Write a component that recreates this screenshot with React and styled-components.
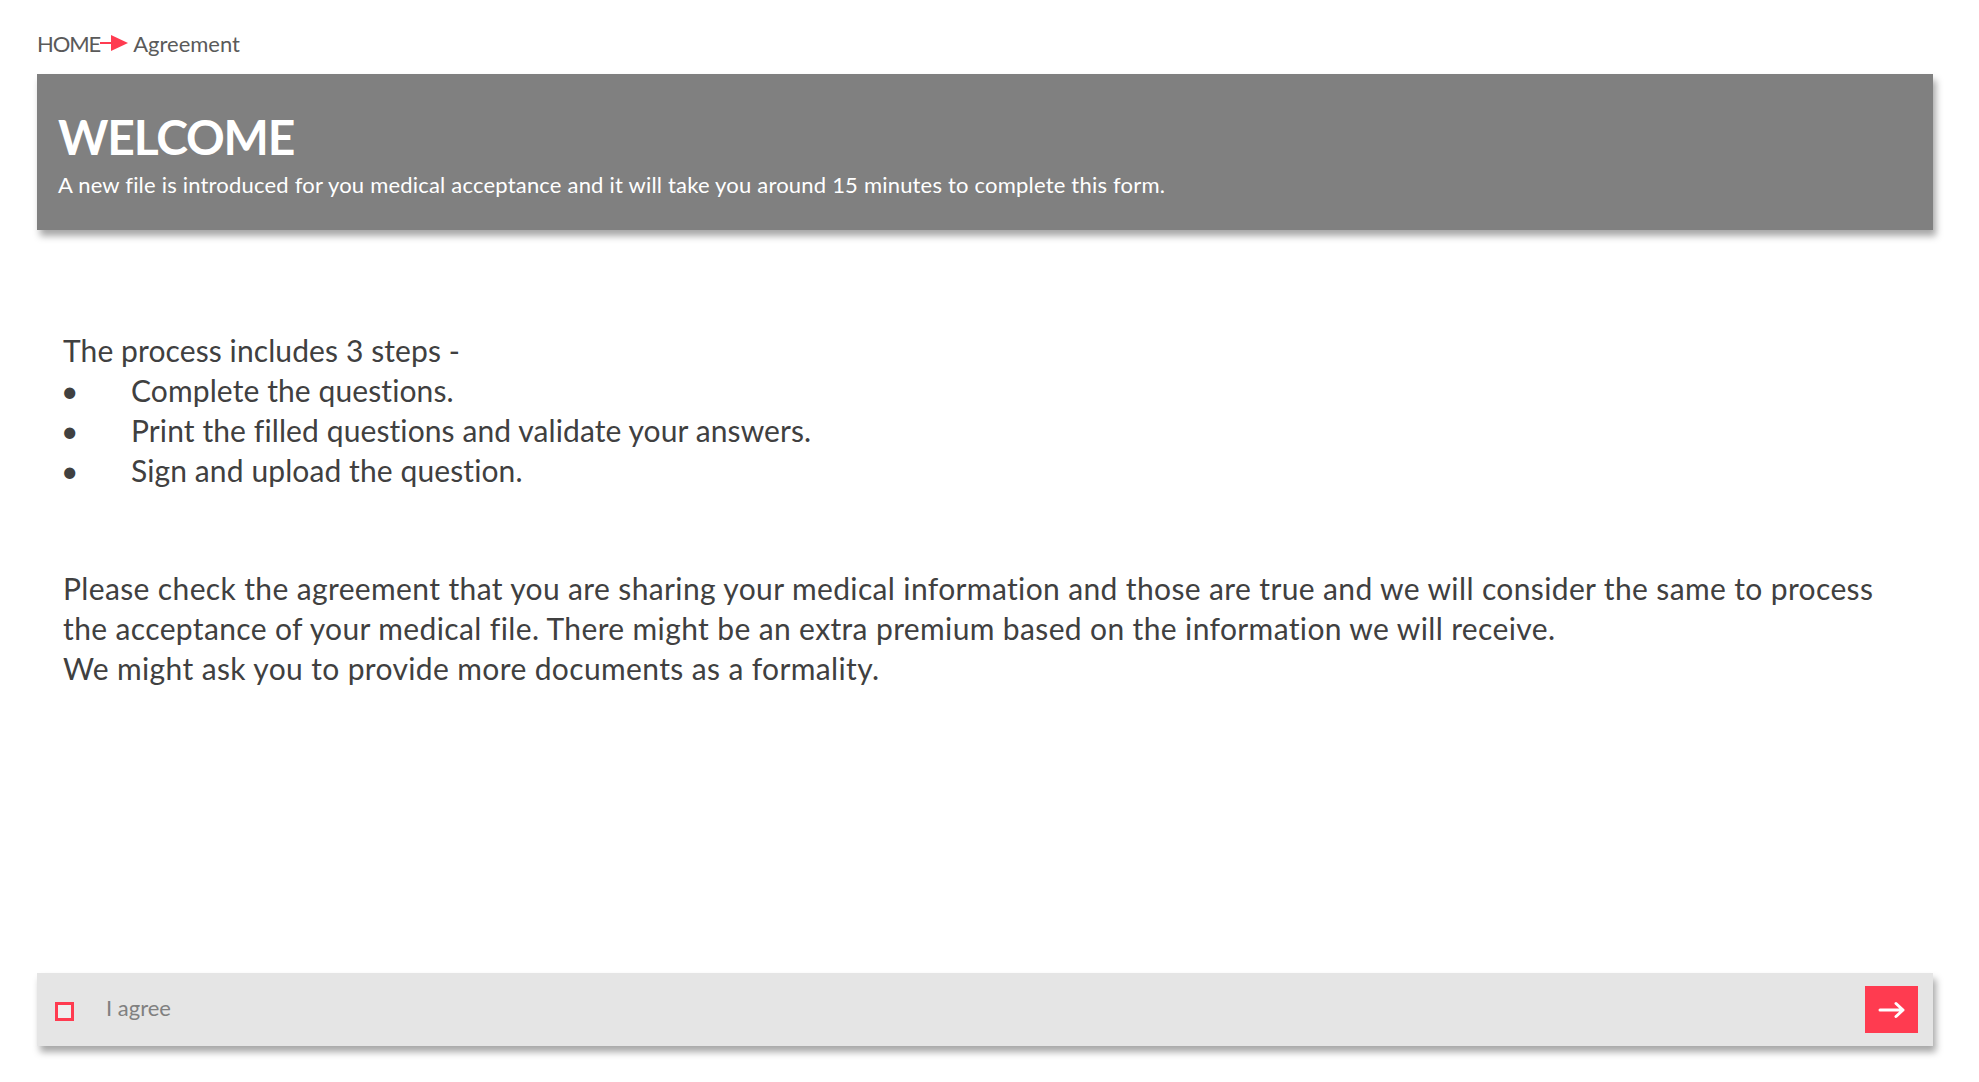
import React, { useState } from 'react'
import styled, { createGlobalStyle } from 'styled-components'

const GlobalStyle = createGlobalStyle`
  html, body {
    margin: 0;
    padding: 0;
    background: #fff;
  }
  body {
    font-family: 'Lato', 'Open Sans', sans-serif;
  }
  * {
    box-sizing: border-box;
  }
`

const RED = '#ff3b50'

const Page = styled.div`
  display: flex;
  flex-direction: column;
  height: 100vh;
  padding: 26px 46px 36px 37px;
`

const Breadcrumb = styled.nav`
  display: flex;
  align-items: center;
  height: 34px;
  margin-bottom: 14px;
  font-size: 22px;
  color: #5a5a5a;

  & .crumb {
    color: inherit;
    text-decoration: none;
    letter-spacing: -1.1px;
  }
`

const Header = styled.header`
  display: flex;
  flex-direction: column;
  justify-content: center;
  height: 156px;
  padding: 6px 21px 0;
  background: #808080;
  color: #fff;
  box-shadow: 3px 6px 7px rgba(0, 0, 0, 0.35);
`

const Title = styled.h1`
  margin: 0 0 12px;
  font-size: 48px;
  font-weight: 700;
  line-height: 1;
  letter-spacing: -1.2px;
`

const Subtitle = styled.p`
  margin: 0;
  font-size: 22px;
  line-height: 1.1;
  letter-spacing: 0.2px;
`

const Content = styled.main`
  padding: 100px 26px 0;
  color: #404040;
  font-size: 30px;
  line-height: 40px;
  letter-spacing: 0.1px;
`

const Lead = styled.p`
  margin: 0;
`

const Steps = styled.ul`
  margin: 0 0 78px;
  padding: 0;
  list-style: none;
`

const Step = styled.li`
  display: flex;

  &::before {
    content: '•';
    width: 70px;
    margin-left: -2px;
    flex-shrink: 0;
  }
`

const Paragraph = styled.p`
  margin: 0;
  letter-spacing: 0.37px;
`

const AgreeBar = styled.footer`
  display: flex;
  align-items: center;
  height: 73px;
  margin-top: auto;
  padding: 0 15px 0 18px;
  background: #e5e5e5;
  box-shadow: 3px 6px 7px rgba(0, 0, 0, 0.35);
`

const CheckLabel = styled.label`
  display: flex;
  align-items: center;
  flex: 1;
  cursor: pointer;
  font-size: 22px;
  color: #808080;
  padding-bottom: 4px;
`

const Box = styled.span`
  width: 19px;
  height: 19px;
  margin: 8px 32px 0 0;
  border: 3px solid ${RED};
  background: ${p => (p.checked ? RED : '#efefef')};
`

const NextButton = styled.button`
  display: flex;
  align-items: center;
  justify-content: center;
  width: 53px;
  height: 47px;
  padding: 0;
  border: none;
  background: ${RED};
  cursor: pointer;
`

const CrumbArrow = () => (
  <svg width="30" height="18" viewBox="0 0 30 18" style={{ margin: '0 3px 0 0' }}>
    <line x1="0" y1="9" x2="16" y2="9" stroke={RED} strokeWidth="2" />
    <polygon points="11,1 28,9 11,17" fill={RED} />
  </svg>
)

const NextArrow = () => (
  <svg width="28" height="18" viewBox="0 0 28 18">
    <path d="M2 9 H25 M18 2.5 L25 9 L18 15.5" fill="none" stroke="#fff" strokeWidth="3" strokeLinecap="round" strokeLinejoin="round" />
  </svg>
)

const steps = [
  'Complete the questions.',
  'Print the filled questions and validate your answers.',
  'Sign and upload the question.'
]

export default function App() {
  const [agreed, setAgreed] = useState(false)

  return (
    <Page>
      <GlobalStyle />
      <Breadcrumb>
        <a href="#" className="crumb">HOME</a>
        <CrumbArrow />
        <span>Agreement</span>
      </Breadcrumb>

      <Header>
        <Title>WELCOME</Title>
        <Subtitle>
          A new file is introduced for you medical acceptance and it will take you around 15 minutes to complete this form.
        </Subtitle>
      </Header>

      <Content>
        <Lead>The process includes 3 steps -</Lead>
        <Steps>
          {steps.map((s, idx) => (
            <Step key={idx}>{s}</Step>
          ))}
        </Steps>
        <Paragraph>
          Please check the agreement that you are sharing your medical information and those are true and we will consider the same to process
          <br />
          the acceptance of your medical file. There might be an extra premium based on the information we will receive.
          <br />
          We might ask you to provide more documents as a formality.
        </Paragraph>
      </Content>

      <AgreeBar>
        <CheckLabel onClick={() => setAgreed(!agreed)}>
          <Box checked={agreed} />
          I agree
        </CheckLabel>
        <NextButton aria-label="Next" disabled={!agreed}>
          <NextArrow />
        </NextButton>
      </AgreeBar>
    </Page>
  )
}
